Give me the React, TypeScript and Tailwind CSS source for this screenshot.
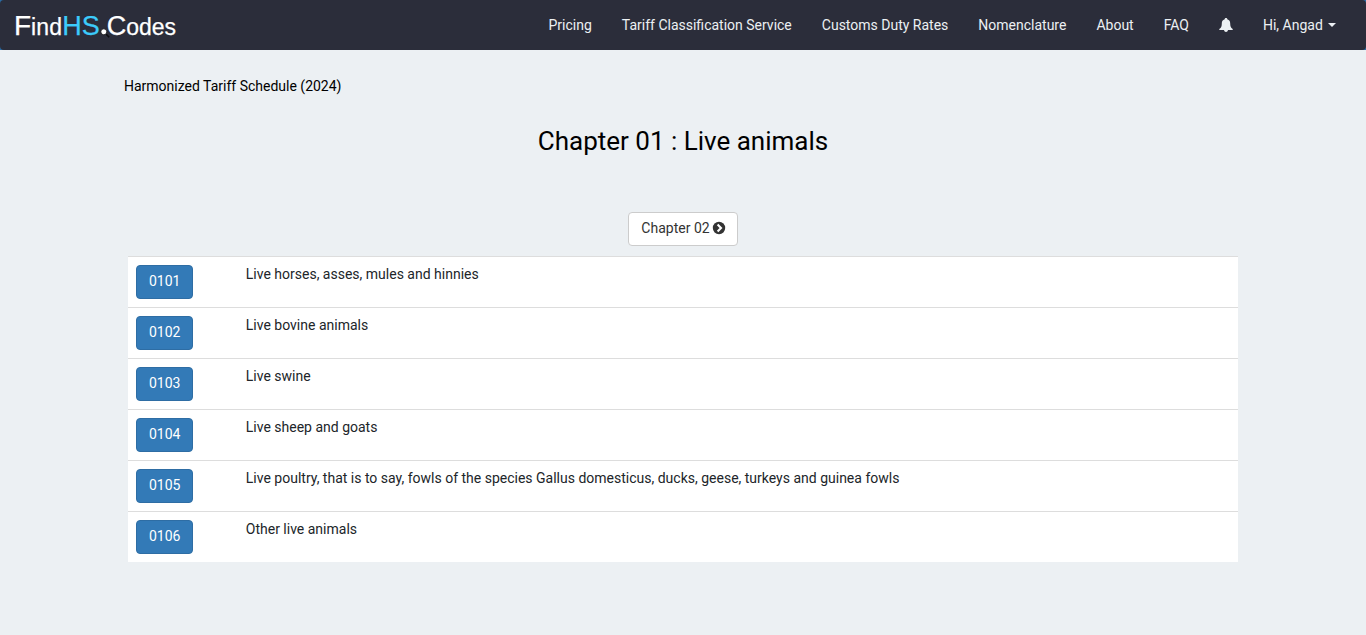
import React from "react";

const links = ["Pricing", "Tariff Classification Service", "Customs Duty Rates", "Nomenclature", "About", "FAQ"];

const rows = [
  ["0101", "Live horses, asses, mules and hinnies"],
  ["0102", "Live bovine animals"],
  ["0103", "Live swine"],
  ["0104", "Live sheep and goats"],
  ["0105", "Live poultry, that is to say, fowls of the species Gallus domesticus, ducks, geese, turkeys and guinea fowls"],
  ["0106", "Other live animals"],
];

function Bell() {
  return (
    <svg width="14" height="14" viewBox="0 0 14 14" fill="currentColor">
      <path d="M7 0c.8 0 1.300.5 1.300 1.300C10.400 1.900 11.200 3.500 11.200 5.500c0 2.800.5 4.300 2.500 5.500v1H.3v-1c2-1.200 2.500-2.700 2.500-5.500 0-2 .8-3.600 2.900-4.200C5.700.5 6.200 0 7 0zM5 12h4c-.2 1.300-1 2-2 2s-1.800-.7-2-2z" />
    </svg>
  );
}

function ChevronCircle() {
  return (
    <svg width="12" height="12" viewBox="0 0 12 12" className="ml-[3px] overflow-visible">
      <circle cx="6" cy="6" r="6.200" fill="#333" />
      <path d="M4.600 2.600 8 6 4.600 9.400" fill="none" stroke="#fff" strokeWidth="2.100" />
    </svg>
  );
}

function Lens() {
  return (
    <svg width="10" height="10" viewBox="0 0 10 10" className="mt-[14px] mr-[-3.6px] ml-[0.5px] shrink-0">
      <path d="M5.500 5.500 9.200 9.200" stroke="#0c0c10" strokeWidth="1.600" />
      <circle cx="3.800" cy="3.800" r="3" fill="#fff" stroke="#0c0c10" strokeWidth="0.800" />
    </svg>
  );
}

export default function App() {
  return (
    <div className="min-h-[635px] bg-[#ecf0f3] font-['Roboto',sans-serif] text-[14px] leading-5 text-[#212529]">
      <div className="bg-[#2a6ca5]">
        <header className="flex h-[50px] items-center justify-between rounded-[4px] bg-[#2b2d3a] pr-[30px] pl-[14px] text-[#ecf0f3]">
          <div className="flex items-center pt-[2px] font-['Liberation_Sans',sans-serif] text-[23px] leading-6 text-white [-webkit-text-stroke:0.25px]">
            <span><span className="text-[28px]">F</span><span className="tracking-[0.15px]">ind</span><span className="text-[27px] text-[#3ccbfa]">HS</span></span>
            <Lens />
            <span><span className="text-[27px]">C</span>odes</span>
          </div>
          <nav className="flex items-center">
            {links.map((l) => <a key={l} className="mr-[30px]">{l}</a>)}
            <Bell />
            <a className="ml-[30px] flex items-center gap-[5.2px]">
              Hi, Angad
              <span className="border-x-4 border-t-4 border-x-transparent border-t-current" />
            </a>
          </nav>
        </header>
      </div>
      <main className="px-[124px] pt-[26px]">
        <p className="text-black">Harmonized Tariff Schedule (2024)</p>
        <h1 className="mt-[30px] text-center text-[26px] leading-[30px] text-black">Chapter 01 : Live animals</h1>
        <div className="mt-[56px] flex justify-center">
          <button className="flex h-[34px] w-[110px] items-center justify-center rounded-[4px] border border-[#ccc] bg-white pb-[2px] text-[#333]">
            Chapter 02
            <ChevronCircle />
          </button>
        </div>
        <div className="mx-1 mt-[10px] bg-white">
          {rows.map(([code, text]) => (
            <div key={code} className="flex h-[51px] items-start border-t border-[#ddd] px-2">
              <div className="w-[109.8px] pt-2">
                <button className="flex h-[34px] w-[57px] items-center justify-center rounded-[4px] border border-[#2e6da4] bg-[#337ab7] pb-[2px] pl-[0.5px] text-white">{code}</button>
              </div>
              <span className="pt-[7px]">{text}</span>
            </div>
          ))}
        </div>
      </main>
    </div>
  );
}
